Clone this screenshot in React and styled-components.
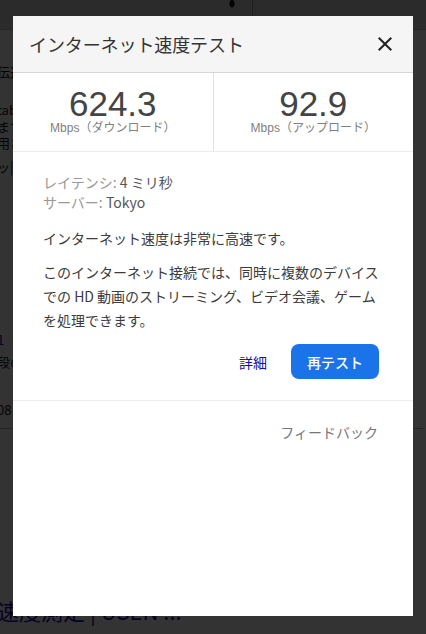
import React from "react";
import styled, { createGlobalStyle } from "styled-components";

const colors = {
  blue: "#1a73e8",
  link: "#1a0dab",
  text: "#222222",
  muted: "#777777",
  line: "#e6e6e6",
};

const GlobalStyle = createGlobalStyle`
  html, body {
    margin: 0;
    padding: 0;
    background: #333333;
  }
  body {
    font-family: "Liberation Sans", "Noto Sans CJK JP", Arial, sans-serif;
  }
`;

const Page = styled.div`
  position: relative;
  width: 426px;
  height: 634px;
  overflow: hidden;
  background: #ffffff;
  color: #111111;
  font-family: "Liberation Sans", "Noto Sans CJK JP", sans-serif;
`;

const TopBar = styled.div`
  height: 29px;
  background: #d6d6d6;
  border-bottom: 1px solid #c4c4c4;
  display: flex;
  align-items: flex-start;
  padding-left: 226px;
  gap: 14px;
  .sep {
    width: 1px;
    height: 15px;
    background: #9a9a9a;
  }
`;

const Results = styled.div`
  display: flex;
  flex-direction: column;
  margin-left: -3px;
`;

const Snippet = styled.div`
  margin-top: ${(p) => p.$top || 0}px;
  font-size: ${(p) => p.$size || 13}px;
  line-height: ${(p) => (p.$size ? p.$size + 2 : 16)}px;
  color: ${(p) => p.$color || "#111"};
  white-space: nowrap;
  font-family: "Noto Sans CJK JP", sans-serif;
`;

const Rule = styled.div`
  margin-top: ${(p) => p.$top || 0}px;
  width: 426px;
  height: 1px;
  background: #bbbbbb;
`;

const Overlay = styled.div`
  position: absolute;
  inset: 0;
  background: rgba(0, 0, 0, 0.8);
  display: flex;
  justify-content: center;
  align-items: flex-start;
  padding-top: 16px;
`;

const Dialog = styled.div`
  width: 400px;
  height: 600px;
  background: #ffffff;
  display: flex;
  flex-direction: column;
  color: ${colors.text};
`;

const Header = styled.div`
  height: 56px;
  background: #f5f5f5;
  border-bottom: 1px solid #d6d6d6;
  display: flex;
  align-items: center;
  justify-content: space-between;
  padding: 0 16px;
`;

const Title = styled.h2`
  margin: 0;
  font-family: "Noto Sans CJK JP", sans-serif;
  font-size: 18px;
  font-weight: 400;
  color: #333333;
  letter-spacing: -0.1px;
`;

const CloseButton = styled.button`
  border: 0;
  background: none;
  padding: 0;
  width: 24px;
  height: 24px;
  display: flex;
  align-items: center;
  justify-content: center;
  cursor: pointer;
  color: #222222;
`;

const Stats = styled.div`
  display: flex;
  height: 78px;
  border-bottom: 1px solid #ececec;
`;

const Stat = styled.div`
  flex: 1;
  display: flex;
  flex-direction: column;
  align-items: center;
  padding-top: 16px;
  box-sizing: border-box;
  border-right: ${(p) => (p.$divider ? "1px solid #e2e2e2" : "none")};
`;

const Value = styled.div`
  font-family: "Liberation Sans", Arial, sans-serif;
  font-size: 35px;
  line-height: 30px;
  color: #444444;
`;

const Unit = styled.div`
  margin-top: 2px;
  font-family: "Liberation Sans", "Noto Sans CJK JP", sans-serif;
  font-size: 12px;
  line-height: 15px;
  color: #808080;
  white-space: nowrap;
`;

const Body = styled.div`
  padding: 20px 34px 0 30px;
  font-family: "Noto Sans CJK JP", sans-serif;
  font-size: 14px;
`;

const Meta = styled.div`
  line-height: 20px;
  color: #555555;
  span {
    color: #999999;
  }
`;

const Text = styled.p`
  margin: ${(p) => p.$top}px 0 0;
  line-height: 24px;
  color: #3c3c3c;
  white-space: nowrap;
`;

const Actions = styled.div`
  display: flex;
  justify-content: flex-end;
  align-items: center;
  gap: 24px;
  margin-top: 12px;
  margin-bottom: 21px;
`;

const LinkButton = styled.button`
  border: 0;
  background: none;
  padding: 0;
  font-family: inherit;
  font-size: 14px;
  color: ${colors.link};
  cursor: pointer;
`;

const PrimaryButton = styled.button`
  border: 0;
  height: 35px;
  padding: 0 16px;
  border-radius: 8px;
  background: ${colors.blue};
  color: #ffffff;
  font-family: inherit;
  font-size: 14px;
  font-weight: 500;
  cursor: pointer;
`;

const Divider = styled.div`
  height: 1px;
  background: #ededed;
`;

const Footer = styled.div`
  display: flex;
  justify-content: flex-end;
  padding: 19px 35px 0 0;
  font-family: "Noto Sans CJK JP", sans-serif;
  font-size: 14px;
  line-height: 24px;
  color: ${colors.muted};
`;

const CloseIcon = () => (
  <svg width="24" height="24" viewBox="0 0 24 24" fill="currentColor">
    <path d="M19 6.41 17.59 5 12 10.59 6.41 5 5 6.41 10.59 12 5 17.59 6.41 19 12 13.41 17.59 19 19 17.59 13.41 12z" />
  </svg>
);

export default function App() {
  return (
    <>
      <GlobalStyle />
      <Page>
        <TopBar>
          <svg width="12" height="10" viewBox="0 0 12 10" fill="#111">
            <path d="M6 0c1.4 0 2.4 1 2.4 2.4V5c0 1.3-1 2.4-2.4 2.4S3.6 6.3 3.6 5V2.4C3.6 1 4.6 0 6 0z" />
          </svg>
          <div className="sep" />
        </TopBar>
        <Results>
          <Snippet $top={34}>伝送速度</Snippet>
          <Snippet $top={22}>tab</Snippet>
          <Snippet $top={1}>まで</Snippet>
          <Snippet $top={0}>用さ</Snippet>
          <Snippet $top={8}>ッ|</Snippet>
          <Snippet $top={157} $color={colors.link}>
            1
          </Snippet>
          <Snippet $top={6}>段の</Snippet>
          <Snippet $top={32}>08</Snippet>
          <Rule $top={10} />
          <Snippet $top={169} $size={22} $color={colors.link}>
            速度測定 | USEN ...
          </Snippet>
        </Results>

        <Overlay>
          <Dialog role="dialog" aria-label="インターネット速度テスト">
            <Header>
              <Title>インターネット速度テスト</Title>
              <CloseButton aria-label="閉じる">
                <CloseIcon />
              </CloseButton>
            </Header>

            <Stats>
              <Stat $divider>
                <Value>624.3</Value>
                <Unit>Mbps（ダウンロード）</Unit>
              </Stat>
              <Stat>
                <Value>92.9</Value>
                <Unit>Mbps（アップロード）</Unit>
              </Stat>
            </Stats>

            <Body>
              <Meta>
                <span>レイテンシ:</span> 4 ミリ秒
              </Meta>
              <Meta>
                <span>サーバー:</span> Tokyo
              </Meta>
              <Text $top={14}>インターネット速度は非常に高速です。</Text>
              <Text $top={10}>
                このインターネット接続では、同時に複数のデバイス
                <br />
                での HD 動画のストリーミング、ビデオ会議、ゲーム
                <br />
                を処理できます。
              </Text>
              <Actions>
                <LinkButton>詳細</LinkButton>
                <PrimaryButton>再テスト</PrimaryButton>
              </Actions>
            </Body>
            <Divider />
            <Footer>フィードバック</Footer>
          </Dialog>
        </Overlay>
      </Page>
    </>
  );
}
